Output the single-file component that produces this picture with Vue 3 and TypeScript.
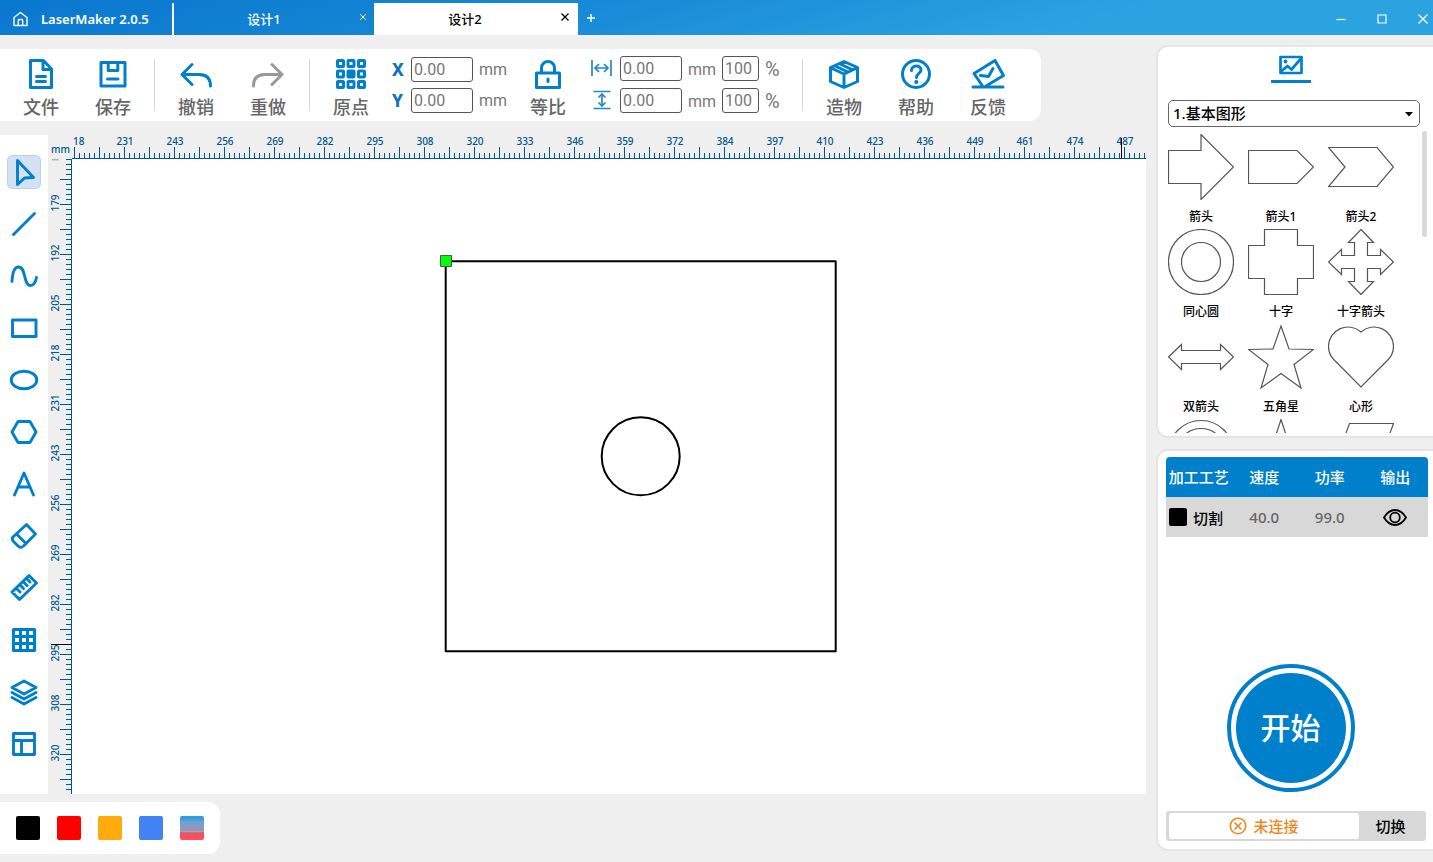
<script setup lang="ts">
import { ref } from 'vue'

interface Tool { name: string; art: string }
interface Shape { name: string; d: string }

const x = ref('0.00')
const y = ref('0.00')
const w = ref('0.00')
const h = ref('0.00')
const wp = ref('100')
const hp = ref('100')
const category = ref('1.基本图形')
const activeTool = ref('选择')

const fileTools: Tool[] = [
  { name: '文件', art: '<path d="M4.500 1.500H17.500L25.500 10V28.500H4.500z M17 2.500V10.500H25"/><path d="M10.500 17.500H19.500 M10.500 22.500H19.500" stroke-linecap="round"/>' },
  { name: '保存', art: '<path d="M3 3.500H27V27H3z M10.200 4V11.500H19.800V4"/><path d="M9.500 20H20" stroke-linecap="round"/>' },
]
const editTools: Tool[] = [
  { name: '撤销', art: '<path d="M11 5.500L1 15.500L11 25.500 M1 15.500H18Q29.500 15.500 29.500 27" stroke-linecap="round"/>' },
  { name: '重做', art: '<path d="M19 5.500L29 15.500L19 25.500 M29 15.500H12Q.5 15.500 .5 27" stroke-linecap="round"/>' },
]
const helpTools: Tool[] = [
  { name: '造物', art: '<path d="M15 2.500L28.500 8.500V22.500L15 28.500L1.500 22.500V8.500z M2 9L15 15L28 9 M15 15V28 M6 7L19 13 M11 5L24 11"/>' },
  { name: '帮助', art: '<circle cx="15" cy="15" r="13.500"/><path d="M10.500 11.500c0-6 9.500-6 9.500-.5c0 3.500-4.500 3.500-4.500 7.500" stroke-linecap="round"/><circle cx="15.300" cy="23" r="2.100" fill="currentColor" stroke="none"/>' },
  { name: '反馈', art: '<path d="M0 28H30 M9.500 27L1 14.500L22 1.500L30.500 16.500L13 27 M7.500 16.500L15.500 17.500L20 9.500" stroke-linecap="round"/>' },
]

const sideTools: Tool[] = [
  { name: '选择', art: '<path d="M8.500 3.500L24.500 20.500L15.500 21L8.500 27.500z"/>' },
  { name: '直线', art: '<path d="M4.500 25.500L25.500 4.500"/>' },
  { name: '曲线', art: '<path d="M3 20.500C3.500 10 6 6 9.500 6C17.500 6 14 24.500 21.500 24.500C24.500 24.500 26.500 21.500 27.500 16.500"/>' },
  { name: '矩形', art: '<rect x="3.500" y="7" width="23.500" height="16.500"/>' },
  { name: '椭圆', art: '<ellipse cx="15" cy="15" rx="12.800" ry="8.800"/>' },
  { name: '多边形', art: '<path d="M9 4.500h12L27 15l-6 10.500H9L3 15z"/>' },
  { name: '文字', art: '<path d="M5.500 26L15 4l9.500 22M9.500 18h11"/>' },
  { name: '橡皮', art: '<path d="M17.500 3.500L26.500 13L14.500 25Q11.500 27.500 9 25L4.500 20.500Q2 17.500 4.500 15.500z M8.500 14L17 22.500"/>' },
  { name: '标尺', art: '<path d="M20 2.500L27.500 10L10.500 26.500L3 19z M8 16L11 19 M11.500 12.500L14.500 15.500 M15 9.500L18 12.500 M18 6L21 9"/>' },
  { name: '阵列', art: '<path d="M4.500 4.500h21v21h-21z M4.500 11.500h21M4.500 18.500h21M11.500 4.500v21M18.500 4.500v21" stroke-width="3.200"/>' },
  { name: '图层', art: '<path d="M15 4l12 6.500l-12 6.500L3 10.500z M3 15.500l12 6.500l12-6.500 M3 20.500l12 6.500l12-6.500"/>' },
  { name: '布局', art: '<path d="M4.500 4.500h21v21h-21z M4.500 11.500h21 M12.500 12v13"/>' },
]

const originCells = Array.from({ length: 9 }, (_, i) => ({
  x: (i % 3) * 10.5, y: Math.floor(i / 3) * 10.5, solid: i === 4,
}))

const shapes: Shape[] = [
  { name: '箭头', d: 'M.5 16.500H33V.5L65.500 33L33 65.500V49.500H.5z' },
  { name: '箭头1', d: 'M.5 16.500H49L65.500 33L49 49.500H.5z' },
  { name: '箭头2', d: 'M.5 13.500H49L65.500 33L49 52.500H.5L17 33z' },
  { name: '同心圆', d: 'M.5 33a32.500 32.500 0 1 0 65 0a32.500 32.500 0 1 0 -65 0 M13.500 33a19.500 19.500 0 1 0 39 0a19.500 19.500 0 1 0 -39 0' },
  { name: '十字', d: 'M16.500 .5H49.500V16.500H65.500V49.500H49.500V65.500H16.500V49.500H.5V16.500H16.500z' },
  { name: '十字箭头', d: 'M33 .5L45.500 13.500H39.500V26.500H52.500V20.500L65.500 33L52.500 45.500V39.500H39.500V52.500H45.500L33 65.500L20.500 52.500H26.500V39.500H13.500V45.500L.5 33L13.500 20.500V26.500H26.500V13.500H20.500z' },
  { name: '双箭头', d: 'M.5 33L13.500 20.500V26.500H52.500V20.500L65.500 33L52.500 45.500V39.500H13.500V45.500z' },
  { name: '五角星', d: 'M33 2L41 25L65.500 25.500L46 40.500L53 64L33 49.500L13 64L20 40.500L.5 25.500L25 25z' },
  { name: '心形', d: 'M33 8A19.500 19.500 0 0 0 .5 22A19.500 19.500 0 0 0 6.200 36L33 63L59.800 36A19.500 19.500 0 0 0 65.500 22A19.500 19.500 0 0 0 33 8z' },
]
const moreShapes: string[] = [
  'M.5 34a32.500 32.500 0 1 0 65 0a32.500 32.500 0 1 0 -65 0 M8.500 34a24.500 24.500 0 1 0 49 0a24.500 24.500 0 1 0 -49 0',
  'M33 .5L41 25L65.500 33L41 41L33 65.500L25 41L.5 33L25 25z',
  'M21.500 4.500H65.500L44.500 61.500H.5z',
]

const xLabels = [231, 243, 256, 269, 282, 295, 308, 320, 333, 346, 359, 372, 384, 397, 410, 423, 436, 449, 461, 474, 487]
const yLabels = [179, 192, 205, 218, 231, 243, 256, 269, 282, 295, 308, 320]
const isMajor = (i: number, first: number): boolean => i % 5 === first
const xTicks = Array.from({ length: 360 }, (_, i) => `M${i * 5 + 2.5} ${isMajor(i, 0) ? 12 : 18}V24`).join('')
const yTicks = Array.from({ length: 200 }, (_, i) => `M${isMajor(i, 4) ? 12 : 18} ${i * 5 + 0.5}H24`).join('')

const swatches = ['black', 'red', 'orange', 'blue', 'photo']
</script>

<template>
  <div class="app">
    <header class="titlebar">
      <div class="brand">
        <svg class="home" viewBox="0 0 16 16"><path d="M1.500 6.500L8 1.500l6.500 5v8h-13z M5.800 14.500V9.500q0-1 1-1h2.400q1 0 1 1v5" /></svg>
        <span>LaserMaker 2.0.5</span>
      </div>
      <div class="tab"><span class="tabname">设计1</span><button class="close" aria-label="关闭设计1"><svg viewBox="0 0 8 8"><path d="M1 1l6 6M7 1L1 7" /></svg></button></div>
      <div class="tab current"><span class="tabname">设计2</span><button class="close" aria-label="关闭设计2"><svg viewBox="0 0 8 8"><path d="M.5 .5l7 7M7.500 .5L.5 7.500" /></svg></button></div>
      <button class="add" aria-label="新建"><svg viewBox="0 0 10 10"><path d="M5 1v8M1 5h8" /></svg></button>
      <div class="winctl">
        <button aria-label="最小化"><svg viewBox="0 0 10 10"><path d="M.5 5.500h9" /></svg></button>
        <button aria-label="最大化"><svg viewBox="0 0 10 10"><path d="M1 1h8v8h-8z" /></svg></button>
        <button aria-label="关闭"><svg viewBox="0 0 10 10"><path d="M.5 .5l9 9M9.500 .5l-9 9" /></svg></button>
      </div>
    </header>

    <div class="body">
      <main class="left">
        <div class="toolbar">
          <button v-for="t in fileTools" :key="t.name" class="tool"><svg viewBox="0 0 30 30" v-html="t.art" /><span>{{ t.name }}</span></button>
          <i class="sep" />
          <button v-for="t in editTools" :key="t.name" class="tool" :class="{ muted: t.name === '重做' }"><svg viewBox="0 0 30 30" v-html="t.art" /><span>{{ t.name }}</span></button>
          <i class="sep" />
          <button class="tool">
            <svg viewBox="0 0 30 30">
              <rect v-for="(c, i) in originCells" :key="i" :x="c.x + 1.5" :y="c.y + 1.5" width="6" height="6" rx=".5" :fill="c.solid ? 'currentColor' : 'none'" />
            </svg>
            <span>原点</span>
          </button>
          <div class="fields pos">
            <label for="fx" class="axis">X</label><input id="fx" v-model="x" class="num"><span class="unit">mm</span>
            <label for="fy" class="axis">Y</label><input id="fy" v-model="y" class="num"><span class="unit">mm</span>
          </div>
          <button class="tool">
            <svg viewBox="0 0 30 30"><path d="M3.500 14h23v14.500h-23z M8.500 14V9a6.500 6.500 0 0 1 13 0v5" /><path d="M15 20v2.500" stroke-linecap="round" /></svg>
            <span>等比</span>
          </button>
          <div class="fields size">
            <label for="fw" aria-label="宽度"><svg class="dim" viewBox="0 0 21 21"><path d="M1 2v16M20 2v16M4 10h13M8 6l-4 4l4 4M13 6l4 4l-4 4" /></svg></label>
            <input id="fw" v-model="w" class="num"><span class="unit">mm</span><input v-model="wp" class="pct" aria-label="宽度百分比"><span class="unit percent">%</span>
            <label for="fh" aria-label="高度"><svg class="dim" viewBox="0 0 21 21"><path d="M2.500 1.500h17M2.500 18.500h17M11 4v12M7.500 7.500L11 4l3.500 3.500M7.500 12.500L11 16l3.500-3.500" /></svg></label>
            <input id="fh" v-model="h" class="num"><span class="unit">mm</span><input v-model="hp" class="pct" aria-label="高度百分比"><span class="unit percent">%</span>
          </div>
          <i class="sep" />
          <button v-for="t in helpTools" :key="t.name" class="tool"><svg viewBox="0 0 30 30" v-html="t.art" /><span>{{ t.name }}</span></button>
        </div>

        <div class="workspace">
          <nav class="side">
            <button v-for="t in sideTools" :key="t.name" :aria-label="t.name" :class="{ active: activeTool === t.name }" @click="activeTool = t.name">
              <svg viewBox="0 0 30 30" v-html="t.art" />
            </button>
          </nav>
          <div class="mm">mm</div>
          <svg class="xruler">
            <path :d="xTicks" /><path d="M0 23.500H4000" />
            <text x="1" y="10">18</text>
            <text v-for="(l, i) in xLabels" :key="l" :x="i * 50 + 53" y="10" text-anchor="middle">{{ l }}</text>
            <path class="cursor" d="M1049.500 3V24" />
          </svg>
          <svg class="yruler">
            <path :d="yTicks" /><path d="M23.500 0V3000" />
            <path class="part" d="M4 .8H10.500" />
            <text v-for="(l, i) in yLabels" :key="l" text-anchor="middle" :transform="`translate(11 ${i * 50 + 44}) rotate(-90)`">{{ l }}</text>
            <path class="cursor" d="M3 485.500H24" />
          </svg>
          <svg class="canvas">
            <rect x="373.700" y="102.300" width="390" height="390" />
            <circle cx="568.700" cy="297.300" r="39" />
            <rect class="handle" x="368.500" y="96.500" width="11" height="11" />
          </svg>
        </div>

        <div class="palette">
          <button v-for="s in swatches" :key="s" :class="s" :aria-label="s" />
        </div>
      </main>

      <aside class="right">
        <section class="panel library">
          <button class="libtab" aria-label="图库">
            <svg viewBox="0 0 24 20"><rect x="1.500" y="2" width="21" height="16" /><path d="M2 16.500L8.500 11l4 3.500L22 3.500" /><circle cx="6.500" cy="6.500" r="1.900" /></svg>
          </button>
          <div class="select">
            <select v-model="category" aria-label="图形分类"><option>1.基本图形</option></select>
            <svg viewBox="0 0 8 5"><path d="M0 0h8L4 4.500z" /></svg>
          </div>
          <div class="scroll">
            <div class="shapes">
              <button v-for="s in shapes" :key="s.name"><svg viewBox="0 0 66 66"><path :d="s.d" /></svg><span>{{ s.name }}</span></button>
              <button v-for="d in moreShapes" :key="d"><svg viewBox="0 0 66 66"><path :d="d" /></svg></button>
            </div>
            <i class="thumb" />
          </div>
        </section>

        <section class="panel job">
          <table>
            <thead><tr><th>加工工艺</th><th>速度</th><th>功率</th><th>输出</th></tr></thead>
            <tbody>
              <tr>
                <td><div class="craft"><i />切割</div></td><td>40.0</td><td>99.0</td>
                <td><svg class="eye" viewBox="0 0 24 17"><path d="M1 8.500Q5.500 1 12 1T23 8.500Q18.500 16 12 16T1 8.500z" /><circle cx="12" cy="8.500" r="4.800" /></svg></td>
              </tr>
            </tbody>
          </table>
          <button class="start"><span>开始</span></button>
          <div class="status">
            <div class="state">
              <svg viewBox="0 0 18 18"><circle cx="9" cy="9" r="7.700" /><path d="M5.500 5.500l7 7M12.500 5.500l-7 7" /></svg>
              <span>未连接</span>
            </div>
            <button>切换</button>
          </div>
        </section>
      </aside>
    </div>
  </div>
</template>

<style>
body { margin: 0; overflow: hidden; }
</style>

<style scoped>
.app { height: 100vh; display: flex; flex-direction: column; background: #efefef; overflow: hidden; font-family: "Noto Sans", "Noto Sans CJK SC", sans-serif; color: #000; }
* { box-sizing: border-box; }
button { border: 0; padding: 0; background: none; font: inherit; color: inherit; cursor: pointer; }
svg { display: block; fill: none; }
button, label, td > svg { flex: none; }

.titlebar { height: 35px; flex: none; display: flex; align-items: flex-end; background: linear-gradient(165deg, #0877ce 0%, #1686d5 35%, #2ba3e1 75%, #2ca3e1 100%); color: #fff; font-size: 13px; font-weight: 500; }
.brand { width: 174px; height: 32px; display: flex; align-items: center; padding-left: 12px; gap: 12px; border-right: 2px solid #fff; white-space: nowrap; font-weight: 600; }
.home { width: 17px; height: 16px; stroke: #fff; stroke-width: 1.4; stroke-linejoin: round; }
.tab { width: 200px; height: 32px; display: flex; align-items: center; padding-right: 7px; }
.tab.current { width: 204px; padding-right: 9px; background: #fff; color: #000; }
.tabname { flex: 1; text-align: center; padding: 0 5px 2px 0; }
.close { width: 8px; height: 8px; margin-bottom: 4px; }
.close svg { width: 8px; height: 8px; stroke: currentColor; stroke-width: 1; }
.current .close svg { stroke-width: 1.3; }
.add { width: 26px; height: 35px; display: grid; place-items: center; }
.add svg { width: 10px; height: 10px; stroke: #fff; stroke-width: 1.4; }
.winctl { margin-left: auto; height: 32px; display: flex; align-items: center; gap: 31px; padding-right: 5px; }
.winctl svg { width: 10px; height: 10px; stroke: #fff; stroke-width: 1.2; }

.body { flex: 1; min-height: 0; display: grid; grid-template-columns: minmax(0, 1fr) 276px; gap: 11px; }
.left { min-height: 0; display: flex; flex-direction: column; align-items: flex-start; padding: 14px 0 8px; }
.toolbar { flex: none; height: 72px; display: flex; padding: 0 17px 0 5px; background: #fff; border-radius: 0 12px 12px 0; color: #666; }
.tool { width: 72px; display: flex; flex-direction: column; align-items: center; padding-top: 10px; gap: 5px; font-size: 18px; font-weight: 500; line-height: 26px; }
.tool svg { width: 30px; height: 30px; overflow: visible; color: #0080cb; stroke: #0080cb; stroke-width: 3; stroke-linejoin: round; }
.tool.muted svg { stroke: #999; }
.sep { width: 1px; height: 52px; margin: 10px 5px; background: #d6d6d6; }
.fields { display: grid; grid-auto-rows: 25px; align-items: center; align-content: start; row-gap: 6px; font: 16px/25px Roboto, sans-serif; color: #777; }
.pos { grid-template-columns: 19px 62px 28px; padding: 8px 11px 0 5px; }
.unit { padding-left: 6px; }
.axis { font: 800 17px/25px "Noto Sans", sans-serif; color: #1470c0; }
.size { grid-template-columns: 29px 62px 40px 37px 22px; padding: 7px 16px 0 7px; row-gap: 7px; }
.size .unit { padding-top: 2px; }
.percent { font-size: 20px; }
.num, .pct { width: 100%; height: 25px; border: 1px solid #555; border-radius: 3px; padding: 0 2px; background: #fff; color: #777; font: 16px Roboto, sans-serif; }
.dim { width: 21px; height: 21px; stroke: #2088d0; stroke-width: 1.7; }

.workspace { flex: 1; min-height: 0; width: 100%; margin-top: 14px; display: grid; grid-template-columns: 48px 24px minmax(0, 1fr); grid-template-rows: 24px minmax(0, 1fr); }
.side { grid-row: 1 / 3; background: #fff; display: flex; flex-direction: column; align-items: center; gap: 18px; padding-top: 20px; overflow: hidden; }
.side button { width: 34px; height: 34px; display: grid; place-items: center; border-radius: 6px; }
.side button.active { background: #d5e1f2; box-shadow: inset 0 0 0 1px #b5d5ef; }
.side svg { width: 30px; height: 30px; stroke: #0080cb; stroke-width: 2.9; stroke-linejoin: round; stroke-linecap: round; }
.mm { font-size: 10px; line-height: 14px; color: #00568d; padding: 7px 0 0 3px; font-weight: 500; }
.xruler, .yruler { width: 100%; height: 100%; overflow: hidden; stroke: #00568d; stroke-width: 1; }
.xruler text, .yruler text { font: 500 10px "Noto Sans", sans-serif; fill: #00568d; stroke: none; }
.yruler .part { stroke: #7f9cb0; }
.xruler .cursor, .yruler .cursor { stroke: #000; }
.canvas { width: 100%; height: 100%; background: #fff; stroke: #000; stroke-width: 2; stroke-linejoin: round; }
.handle { fill: #0f0; stroke: #555; stroke-width: 1; }

.palette { flex: none; margin-top: 8px; display: flex; gap: 17px; padding: 14px 16px; background: #fff; border-radius: 0 12px 12px 0; }
.palette button { width: 24px; height: 24px; border-radius: 2px; }
.palette .black { background: #000; }
.palette .red { background: #f00; }
.palette .orange { background: #ffab0d; }
.palette .blue { background: #4382f5; }
.palette .photo { background: linear-gradient(#2e9fdb 0 3px, #489fd3 3px 5px, #66a5d5 5px 8px, #8e96c8 8px 15px, #c49b91 15px 16px, #a67f83 16px 17px, #fa4f5d 17px); }

.right { min-height: 0; display: flex; flex-direction: column; padding: 10px 0 11px; gap: 11px; }
.panel { margin-left: -1px; background: #fff; border: 2px solid #e5e5e5; border-right: 0; border-radius: 12px 0 0 12px; }
.library { height: 393px; flex: none; display: flex; flex-direction: column; padding: 7px 5px 3px 10px; }
.libtab { align-self: center; width: 40px; height: 29px; margin-left: -14px; border-bottom: 3px solid #0080cb; }
.libtab svg { width: 24px; height: 20px; margin: 1px auto 5px; stroke: #0080cb; stroke-width: 2.7; stroke-linejoin: round; }
.libtab circle { fill: #0080cb; stroke: none; }
.select { flex: none; display: grid; align-items: center; width: 252px; height: 27px; margin-top: 17px; }
.select > * { grid-area: 1 / 1; }
.select select { appearance: none; width: 100%; height: 27px; border: 1px solid #666; border-radius: 5px; background: #fff; padding: 0 4px 2px; font: 500 15px "Noto Sans", "Noto Sans CJK SC", sans-serif; color: #000; }
.select svg { justify-self: end; width: 8px; height: 5px; margin: 2px 7px 0 0; fill: #000; pointer-events: none; }
.scroll { flex: 1; min-height: 0; display: flex; justify-content: space-between; overflow: hidden; padding-top: 4px; }
.shapes { display: grid; grid-template-columns: repeat(3, 66px); grid-auto-rows: 95px; column-gap: 14px; align-content: start; padding-top: 3px; }
.shapes button { display: flex; flex-direction: column; align-items: center; white-space: nowrap; font-size: 12px; font-weight: 500; line-height: 18px; gap: 8px; }
.shapes svg { width: 66px; height: 66px; stroke: #555; stroke-width: 1.2; }
.thumb { width: 5px; height: 106px; margin-right: 1px; background: #d9d9d9; border-radius: 2px; }

.job { flex: 1; min-height: 0; display: flex; flex-direction: column; padding: 6px 5px 8px 8px; }
table { width: 100%; table-layout: fixed; border-collapse: collapse; font-size: 15px; flex: none; }
th, td { height: 40px; padding: 0; text-align: center; }
th { background: #0080cb; color: #fff; font-weight: 500; padding-bottom: 2px; }
th:first-child { border-radius: 4px 0 0 0; }
th:last-child { border-radius: 0 4px 0 0; }
td { background: #d8d8d8; color: #666; font-weight: 500; }
.craft { display: flex; align-items: center; padding-left: 3px; gap: 6px; color: #000; }
.craft i { width: 18px; height: 18px; background: #000; border-radius: 2px; }
.eye { width: 24px; height: 17px; margin: 0 auto; stroke: #000; stroke-width: 1.8; }
.start { align-self: center; width: 128px; height: 128px; margin: auto 0 19px -13px; border: 4px solid #0080cb; border-radius: 50%; padding: 5px; background: #fff; }
.start span { display: grid; place-items: center; height: 100%; padding-bottom: 4px; border-radius: 50%; background: #0080cb; color: #fff; font-size: 30px; font-weight: 500; }
.status { flex: none; display: flex; height: 30px; margin-right: 2px; padding: 2px 0 2px 3px; background: #d8d8d8; border-radius: 3px; font-size: 15px; font-weight: 500; }
.state { flex: 1; display: flex; align-items: center; justify-content: center; gap: 6px; background: #fff; border-radius: 3px; color: #ee8722; }
.state svg { width: 18px; height: 18px; stroke: currentColor; stroke-width: 1.6; }
.state span, .status button { padding-bottom: 2px; }
.status button { width: 67px; padding-right: 4px; }
</style>
